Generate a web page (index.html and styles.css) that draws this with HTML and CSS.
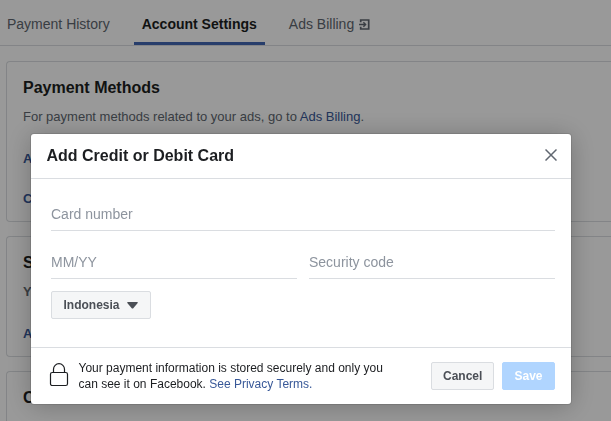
FILE: index.html
```html
<!DOCTYPE html>
<html lang="en">
<head>
    <meta charset="UTF-8">
    <meta name="viewport" content="width=device-width, initial-scale=1.0">
    <title>Account Settings</title>
    <link rel="stylesheet" href="styles.css">
</head>
<body>
    <nav class="tabs">
        <a class="tab">Payment History</a>
        <a class="tab tab--active">Account Settings</a>
        <a class="tab tab--ads">Ads Billing
            <svg class="tab__icon" width="11" height="11" viewBox="0 0 11 11" fill="none" stroke="currentColor" stroke-width="1.7">
                <path d="M1.7 3.2V1H9.7v9H1.7V7.8"/>
                <path d="M0 5.5h6.5M4.4 3.3l2.2 2.2-2.2 2.2" stroke-width="1.4"/>
            </svg>
        </a>
    </nav>

    <main class="cards">
        <section class="card card--methods">
            <h2>Payment Methods</h2>
            <p>For payment methods related to your ads, go to <a>Ads Billing</a>.</p>
            <a class="card__link">A</a>
            <a class="card__link">C</a>
        </section>
        <section class="card card--shipping">
            <h2>S</h2>
            <p><b>Y</b></p>
            <a class="card__link">A</a>
        </section>
        <section class="card card--contact">
            <h2>C</h2>
        </section>
    </main>

    <div class="overlay">
        <form class="dialog">
            <header class="dialog__header">
                <h1>Add Credit or Debit Card</h1>
                <svg class="dialog__close" width="12" height="12" viewBox="0 0 12 12" stroke="#606770" stroke-width="1.5">
                    <path d="M.5.5l11 11M11.5.5l-11 11"/>
                </svg>
            </header>
            <div class="dialog__body">
                <input class="field" type="text" placeholder="Card number">
                <div class="row">
                    <input class="field" type="text" placeholder="MM/YY">
                    <input class="field" type="text" placeholder="Security code">
                </div>
                <button type="button" class="btn btn--country">Indonesia
                    <svg width="11" height="7" viewBox="0 0 11 7" fill="#4b4f56">
                        <path d="M.9 0h9.2q1 0 .6 1L6.5 6q-1 1-2 0L.3 1Q-.1 0 .9 0z"/>
                    </svg>
                </button>
            </div>
            <footer class="dialog__footer">
                <svg class="lock" width="20" height="24" viewBox="0 0 20 24" fill="none" stroke="#1c1e21" stroke-width="1.2">
                    <rect x="1.5" y="9.5" width="17" height="13" rx="1.8"/>
                    <path d="M4.5 9.5V6.2a5.5 5.5 0 0 1 11 0V9.5"/>
                </svg>
                <p class="dialog__note">Your payment information is stored securely and only you<br>can see it on Facebook. <a>See Privacy Terms.</a></p>
                <button type="button" class="btn">Cancel</button>
                <button type="button" class="btn btn--save">Save</button>
            </footer>
        </form>
    </div>
</body>
</html>
```
FILE: styles.css
```css
* {
    box-sizing: border-box;
    margin: 0;
    padding: 0;
}

body {
    height: 421px;
    overflow: hidden;
    background-color: #fff;
    color: #1c1e21;
    font-family: "Liberation Sans", Arial, sans-serif;
    font-size: 12px;
}

a {
    color: #385898;
}

.tabs {
    display: flex;
    height: 46px;
    border-bottom: 1px solid #dadde1;
}

.tab {
    height: 45px;
    padding: 15px 8px 0 7px;
    font-size: 14px;
    line-height: 18px;
    color: #606770;
    white-space: nowrap;
}

.tab--active {
    margin-left: 16px;
    border-bottom: 3px solid #4267b2;
    padding: 15px 8px 0;
    color: #1c1e21;
    font-weight: bold;
}

.tab--ads {
    margin-left: 17px;
}

.tab__icon {
    margin-left: 1px;
    vertical-align: -1px;
}

.cards {
    display: flex;
    flex-direction: column;
    gap: 14px;
    padding: 15px 0 0 6px;
}

.card {
    padding: 16px;
    border: 1px solid #dadde1;
    border-right: none;
    border-radius: 4px 0 0 4px;
}

.card--methods {
    height: 161px;
}

.card--shipping {
    height: 121px;
}

.card--contact {
    height: 50px;
    border-bottom: none;
    border-radius: 4px 0 0 0;
}

.card h2 {
    font-size: 16px;
    line-height: 20px;
}

.card p {
    margin-top: 11px;
    color: #606770;
    font-size: 13px;
    line-height: 16px;
}

.card__link {
    display: block;
    margin-top: 24px;
    font-size: 13px;
    font-weight: bold;
    line-height: 16px;
}

.card p + .card__link {
    margin-top: 26px;
}

.overlay {
    position: fixed;
    inset: 0;
    background-color: rgba(0, 0, 0, 0.4);
}

.dialog {
    width: 540px;
    height: 270px;
    margin: 134px 0 0 31px;
    border-radius: 3px;
    background-color: #fff;
    box-shadow: 0 2px 26px rgba(0, 0, 0, 0.25), 0 0 0 1px rgba(0, 0, 0, 0.1);
}

.dialog__header {
    display: flex;
    justify-content: space-between;
    align-items: center;
    height: 45px;
    padding: 0 14px 1px 15.5px;
    border-bottom: 1px solid #dadde1;
}

.dialog__header h1 {
    font-size: 16px;
    line-height: 19px;
}

.dialog__close {
    margin-bottom: 2px;
}

.dialog__body {
    height: 168px;
    padding: 19px 16px 0 20px;
}

.field {
    display: block;
    width: 100%;
    height: 33px;
    border: none;
    border-bottom: 1px solid #dadde1;
    background: none;
    font-family: inherit;
    font-size: 14px;
}

.field::placeholder {
    color: #8d949e;
}

.row {
    display: flex;
    gap: 12px;
    margin-top: 15px;
}

.btn {
    height: 28px;
    padding: 0 11px;
    border: 1px solid #dadde1;
    border-radius: 2px;
    background-color: #f5f6f7;
    color: #4b4f56;
    font-family: inherit;
    font-size: 12px;
    font-weight: bold;
}

.btn--country {
    display: flex;
    align-items: center;
    gap: 7px;
    width: 100px;
    margin-top: 12px;
    padding-left: 11.5px;
}

.dialog__footer {
    display: flex;
    align-items: center;
    height: 57px;
    padding: 0 16px 0 18px;
    border-top: 1px solid #dadde1;
}

.lock {
    margin-top: -2px;
}

.dialog__note {
    flex: 1;
    margin-left: 9.5px;
    line-height: 16px;
    white-space: nowrap;
}

.dialog__footer .btn {
    width: 63px;
}

.dialog__footer .btn--save {
    width: 53px;
    margin-left: 8px;
    border-color: #b0d5ff;
    background-color: #b0d5ff;
    color: #fff;
}
```
